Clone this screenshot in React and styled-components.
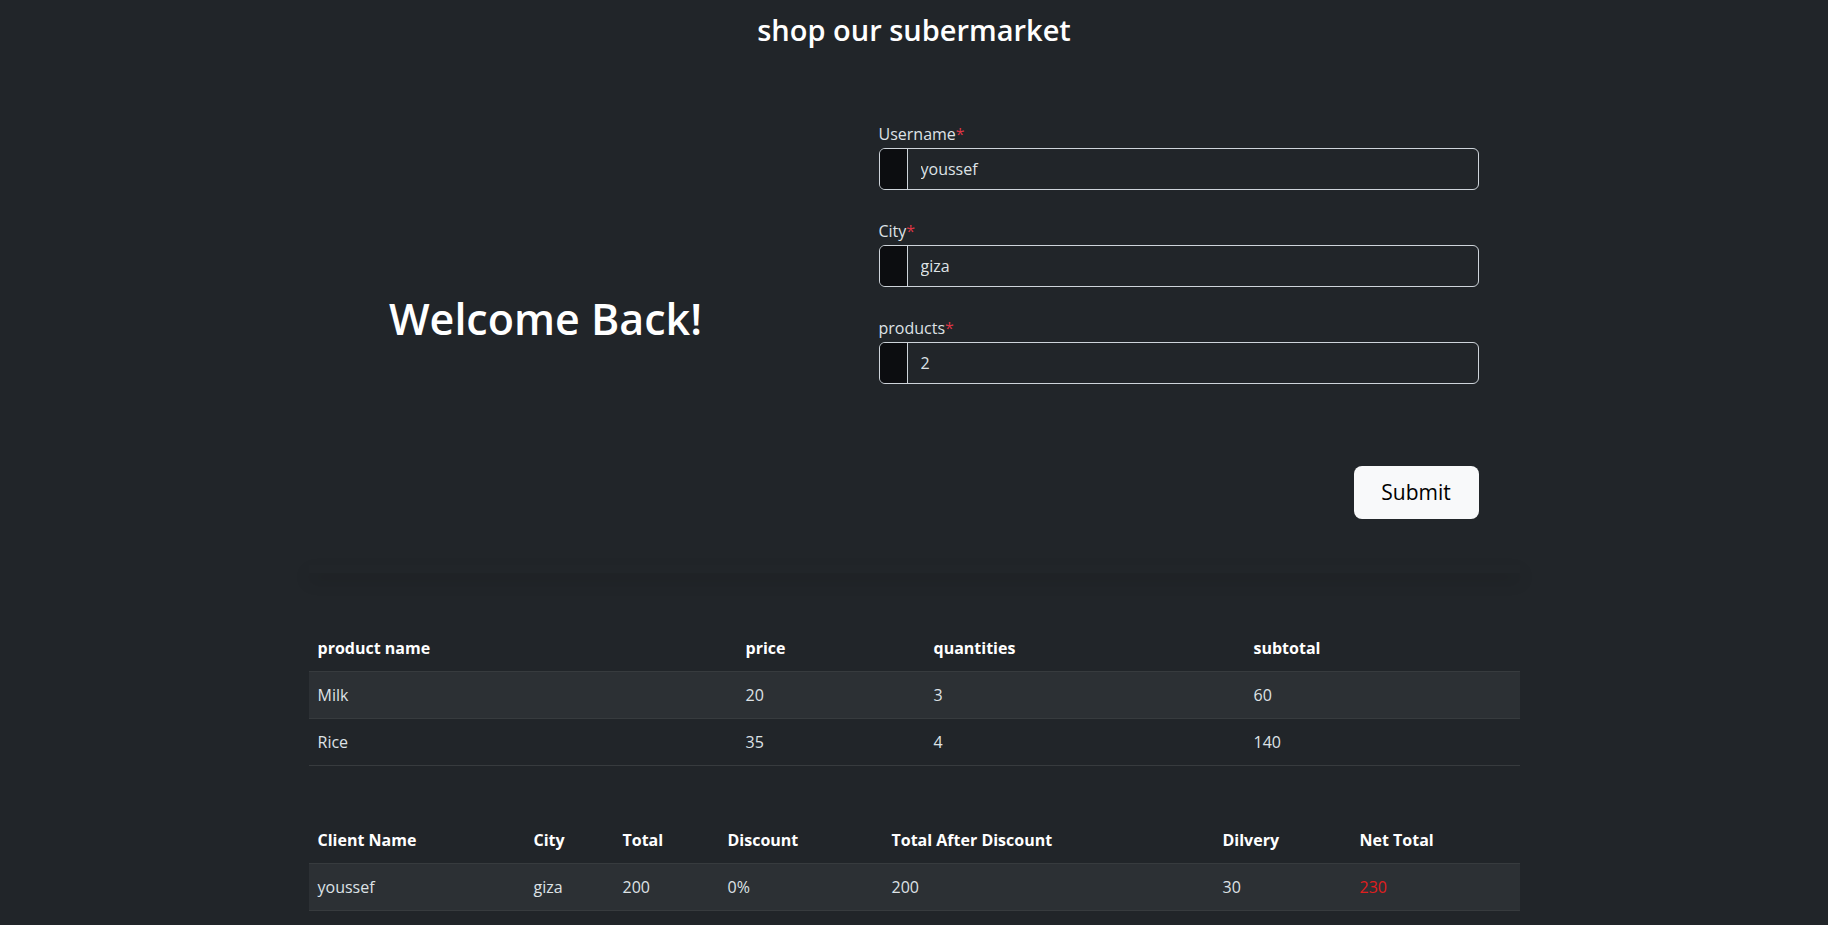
import styled, { createGlobalStyle } from 'styled-components'

const GlobalStyle = createGlobalStyle`
  body {
    margin: 0;
    background: #212529;
    color: #dee2e6;
    font-family: "Open Sans", "Noto Sans", sans-serif;
    font-size: 16px;
  }
`

const products = [
  { name: 'Milk', price: 20, qty: 3 },
  { name: 'Rice', price: 35, qty: 4 },
]

const App = () => {
  return (
    <Page>
      <GlobalStyle />
      <Card>
        <Title>shop our subermarket</Title>
        <Body>
          <Greeting>
            <h1>Welcome Back!</h1>
          </Greeting>
          <Form onSubmit={(e) => e.preventDefault()}>
            <Field>
              <Label>Username<Star>*</Star></Label>
              <InputGroup>
                <Addon />
                <Input type="text" defaultValue="youssef" />
              </InputGroup>
            </Field>
            <Field>
              <Label>City<Star>*</Star></Label>
              <InputGroup>
                <Addon />
                <Input type="text" defaultValue="giza" />
              </InputGroup>
            </Field>
            <Field>
              <Label>products<Star>*</Star></Label>
              <InputGroup>
                <Addon />
                <Input type="text" defaultValue="2" />
              </InputGroup>
            </Field>
            <Actions>
              <SubmitButton type="submit">Submit</SubmitButton>
            </Actions>
          </Form>
        </Body>
      </Card>

      <Table $gap={52}>
        <colgroup>
          <col width="428" />
          <col width="188" />
          <col width="320" />
          <col width="275" />
        </colgroup>
        <thead>
          <tr>
            <Th>product name</Th>
            <Th>price</Th>
            <Th>quantities</Th>
            <Th>subtotal</Th>
          </tr>
        </thead>
        <tbody>
          {products.map((p) => (
            <Row key={p.name}>
              <Td>{p.name}</Td>
              <Td>{p.price}</Td>
              <Td>{p.qty}</Td>
              <Td>{p.price * p.qty}</Td>
            </Row>
          ))}
        </tbody>
      </Table>

      <Table $gap={51}>
        <colgroup>
          <col width="216" />
          <col width="89" />
          <col width="105" />
          <col width="164" />
          <col width="331" />
          <col width="137" />
          <col width="169" />
        </colgroup>
        <thead>
          <tr>
            <Th>Client Name</Th>
            <Th>City</Th>
            <Th>Total</Th>
            <Th>Discount</Th>
            <Th>Total After Discount</Th>
            <Th>Dilvery</Th>
            <Th>Net Total</Th>
          </tr>
        </thead>
        <tbody>
          <Row>
            <Td>youssef</Td>
            <Td>giza</Td>
            <Td>200</Td>
            <Td>0%</Td>
            <Td>200</Td>
            <Td>30</Td>
            <Td $danger>230</Td>
          </Row>
        </tbody>
      </Table>
    </Page>
  )
}

export default App

const Page = styled.div`
  padding-bottom: 40px;
`

const Card = styled.section`
  position: relative;
  width: 1211px;
  box-sizing: border-box;
  margin: 0 auto;
  padding: 13px 41px 54px 0;

  /* soft shadow under the form block only */
  &::after {
    content: '';
    position: absolute;
    left: 0;
    right: 0;
    bottom: 0;
    height: 8px;
    box-shadow: 0 8px 16px rgba(0, 0, 0, 0.15);
    pointer-events: none;
  }
`

const Title = styled.h2`
  margin: 0 -41px 74px 0;
  text-align: center;
  font-size: 29px;
  font-weight: 600;
  line-height: 1.2;
  color: #fff;
`

const Body = styled.div`
  display: flex;
  align-items: center;
`

const Greeting = styled.div`
  width: 474px;
  text-align: center;
  margin-top: -4px;

  h1 {
    margin: 0;
    font-size: 43px;
    font-weight: 600;
    line-height: 1.2;
    color: #fff;
  }
`

const Form = styled.form`
  width: 600px;
  margin-left: 96px;
`

const Field = styled.div`
  margin-bottom: 29px;

  &:last-of-type {
    margin-bottom: 0;
  }
`

const Label = styled.label`
  display: block;
  line-height: 24px;
  margin-bottom: 2px;
  color: #dee2e6;
`

const Star = styled.span`
  color: #dc3545;
`

const InputGroup = styled.div`
  display: flex;
  height: 42px;
  box-sizing: border-box;
  border: 1px solid #ced4da;
  border-radius: 6px;
  overflow: hidden;
`

const Addon = styled.span`
  width: 27px;
  background: #0c0d10;
  border-right: 1px solid #ced4da;
`

const Input = styled.input`
  flex: 1;
  min-width: 0;
  border: none;
  outline: none;
  background: transparent;
  color: #dee2e6;
  font: inherit;
  padding: 0 13px;
`

const Actions = styled.div`
  display: flex;
  justify-content: flex-end;
  margin-top: 82px;
`

const SubmitButton = styled.button`
  width: 125px;
  height: 53px;
  border: none;
  border-radius: 8px;
  background: #f8f9fa;
  color: #000;
  font-family: inherit;
  font-size: 21px;
  cursor: pointer;
`

const Table = styled.table`
  width: 1211px;
  margin: ${(p) => p.$gap}px auto 0;
  border-collapse: collapse;
  table-layout: fixed;
`

const Th = styled.th`
  height: 46px;
  padding: 0 9px;
  text-align: left;
  font-weight: 700;
  color: #fff;
  border-bottom: 1px solid #373b3e;
`

const Row = styled.tr`
  &:nth-child(odd) {
    background: #2c3034;
  }
`

const Td = styled.td`
  height: 46px;
  padding: 0 9px;
  color: ${(p) => (p.$danger ? '#e01e1e' : '#dee2e6')};
  border-bottom: 1px solid #373b3e;
`
